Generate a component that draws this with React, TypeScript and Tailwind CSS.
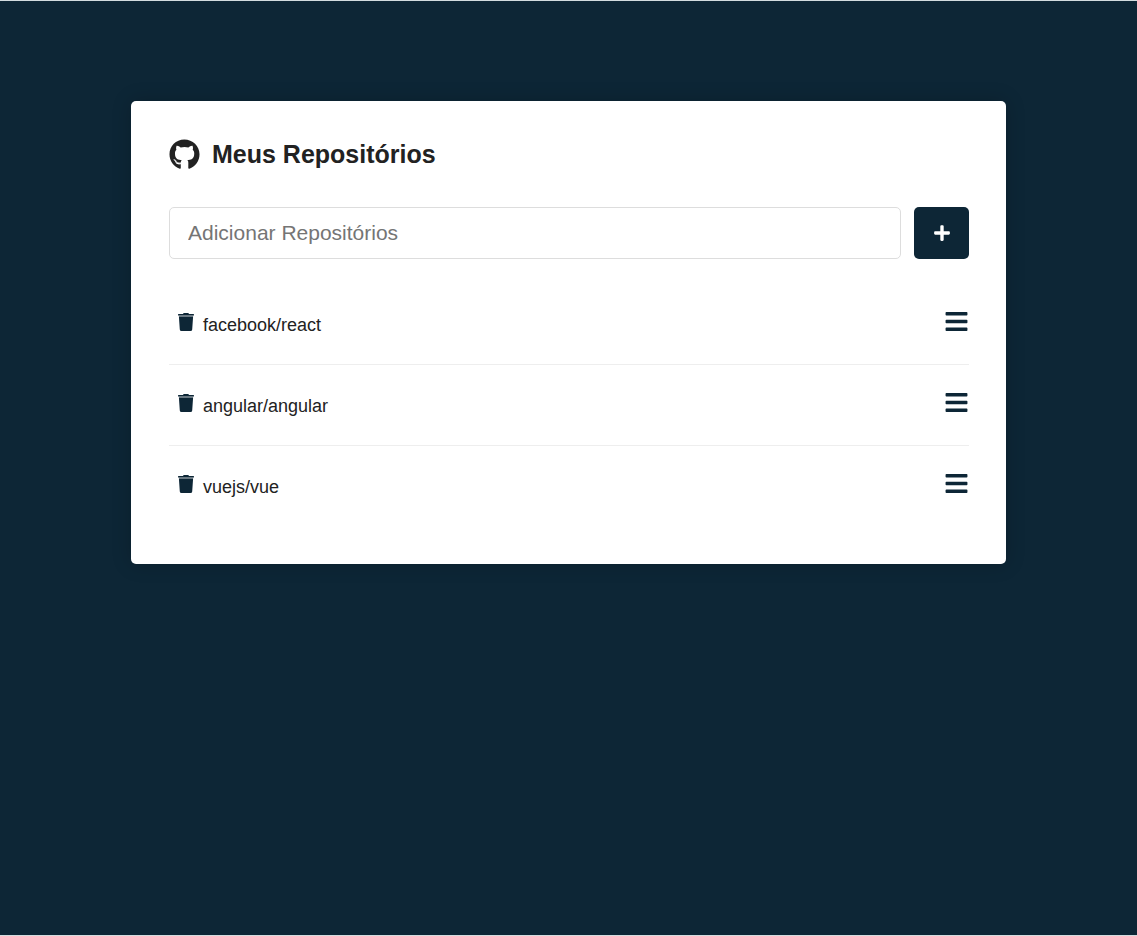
import { useState } from "react";
import type { FormEvent } from "react";
import { FaBars, FaGithub, FaPlus } from "react-icons/fa";

const initialRepositories = ["facebook/react", "angular/angular", "vuejs/vue"];

function TrashIcon() {
  return (
    <svg width="18" height="18" viewBox="0 0 18 18" fill="currentColor" aria-hidden="true">
      <path d="M1.6 1H6l.4-.7Q6.600 0 7 0h4q.4 0 .6.300L12 1h4.400q.6 0 .6.600V2.200q0 .3-.3.300H1.300Q1 2.500 1 2.200V1.600Q1 1 1.600 1Z" />
      <path d="M1.900 3.500h14.200l-.9 12.900Q15.100 18 13.500 18h-9Q2.900 18 2.800 16.400Z" />
      <path d="M1.900 2.500h14.200v1H1.900Z" opacity="0.45" />
    </svg>
  );
}

export default function App() {
  const [repositories, setRepositories] = useState<string[]>(initialRepositories);
  const [name, setName] = useState("");

  function handleSubmit(event: FormEvent) {
    event.preventDefault();
    const value = name.trim();
    if (!value || repositories.includes(value)) return;
    setRepositories([...repositories, value]);
    setName("");
  }

  function handleDelete(repository: string) {
    setRepositories(repositories.filter((item) => item !== repository));
  }

  return (
    <div className="min-h-screen border-y border-[#d3dcdf] bg-[#0d2636] pt-[100px] font-['Liberation_Sans',Arial,sans-serif] text-[#222]">
      <main className="mx-auto max-w-[875px] rounded-[5px] bg-white py-[38px] pr-[37px] pl-[38px] shadow-[0_0_20px_rgba(0,0,0,0.2)]">
        <h1 className="flex items-center gap-3 text-[25px] leading-[31px] font-bold">
          <FaGithub size={31} aria-hidden="true" />
          Meus Repositórios
        </h1>

        <form onSubmit={handleSubmit} className="mt-[37px] flex gap-[13px]">
          <input
            type="text"
            aria-label="Adicionar Repositórios"
            placeholder="Adicionar Repositórios"
            value={name}
            onChange={(event) => setName(event.target.value)}
            className="h-[52px] min-w-0 flex-1 rounded-[5px] border border-[#ddd] px-[18px] text-[21px] placeholder:text-[#757575]"
          />
          <button
            type="submit"
            aria-label="Adicionar"
            className="flex w-[55px] items-center justify-center rounded-[5px] bg-[#0d2636] text-white"
          >
            <FaPlus size={18} aria-hidden="true" />
          </button>
        </form>

        <ul className="mt-[25px] divide-y divide-[#eee]">
          {repositories.map((repository) => (
            <li key={repository} className="flex items-center justify-between pt-7 pb-[26px] text-lg leading-[26px]">
              <span className="flex items-center">
                <button
                  type="button"
                  aria-label={`Excluir ${repository}`}
                  onClick={() => handleDelete(repository)}
                  className="px-2 pb-[6px] text-[#0d2636]"
                >
                  <TrashIcon />
                </button>
                {repository}
              </span>
              <a href="#" aria-label={`Detalhes de ${repository}`} className="-my-2 pb-2 text-[#0d2636]">
                <FaBars size={25} aria-hidden="true" />
              </a>
            </li>
          ))}
        </ul>
      </main>
    </div>
  );
}
